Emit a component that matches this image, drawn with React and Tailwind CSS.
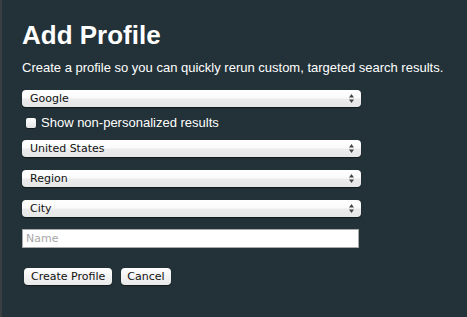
import React from "react";

const ui = { fontFamily: '"DejaVu Sans", "Liberation Sans", sans-serif' };
const helv = { fontFamily: '"Liberation Sans", Arial, sans-serif' };

function Arrows() {
  return (
    <svg width="7" height="11" viewBox="0 0 7 11" className="absolute right-[6px] top-[3px] pointer-events-none">
      <path d="M3.5 1 L6 4.5 H1 Z" fill="#444" />
      <path d="M3.5 10 L6 6.5 H1 Z" fill="#444" />
    </svg>
  );
}

function Select({ label }) {
  return (
    <div className="relative w-[339px] h-[17px]">
      <div
        className="h-full rounded-[4px] bg-[linear-gradient(#ffffff_0%,#fbfbfb_45%,#ebebeb_55%,#e6e6e6_100%)] shadow-[0_1px_1px_rgba(0,0,0,0.5)] pl-[8px] text-[11px] leading-[17px] text-[#111]"
        style={ui}
      >
        {label}
      </div>
      <Arrows />
    </div>
  );
}

export default function App() {
  return (
    <div className="flex w-[467px] h-[317px] bg-[#233238] overflow-hidden">
      <div className="w-[2px] h-full bg-[#3b3f41]" />
      <div className="flex flex-col pl-[20px] pt-[20px]">
        <h1 className="text-[26px] leading-[30px] font-bold text-white" style={helv}>
          Add Profile
        </h1>
        <p className="mt-[10px] text-[13px] leading-[16px] text-white" style={helv}>
          Create a profile so you can quickly rerun custom, targeted search results.
        </p>

        <div className="mt-[14px] flex flex-col">
          <Select label="Google" />
          <label className="mt-[9px] flex items-center gap-[5px] pl-[4px] text-[13px] leading-[14px] text-white" style={helv}>
            <span className="w-[10px] h-[10px] rounded-[2px] bg-[linear-gradient(#ffffff,#e4e4e4)] shadow-[0_1px_1px_rgba(0,0,0,0.5)]" />
            Show non-personalized results
          </label>
          <div className="mt-[10px]">
            <Select label="United States" />
          </div>
          <div className="mt-[13px]">
            <Select label="Region" />
          </div>
          <div className="mt-[13px]">
            <Select label="City" />
          </div>
          <div
            className="mt-[12px] w-[337px] h-[19px] bg-white border border-[#a9a9a9] pl-[3px] text-[11px] leading-[17px] text-[#a8a8a8]"
            style={ui}
          >
            Name
          </div>
          <div className="mt-[20px] flex gap-[9px] pl-[2px]">
            <button
              className="h-[17px] px-[7px] rounded-[4px] bg-[linear-gradient(#ffffff,#f3f3f3_50%,#e9e9e9)] shadow-[0_1px_1px_rgba(0,0,0,0.5)] text-[11px] leading-[17px] text-[#111]"
              style={ui}
            >
              Create Profile
            </button>
            <button
              className="h-[17px] px-[6px] rounded-[4px] bg-[linear-gradient(#ffffff,#f3f3f3_50%,#e9e9e9)] shadow-[0_1px_1px_rgba(0,0,0,0.5)] text-[11px] leading-[17px] text-[#111]"
              style={ui}
            >
              Cancel
            </button>
          </div>
        </div>
      </div>
    </div>
  );
}
